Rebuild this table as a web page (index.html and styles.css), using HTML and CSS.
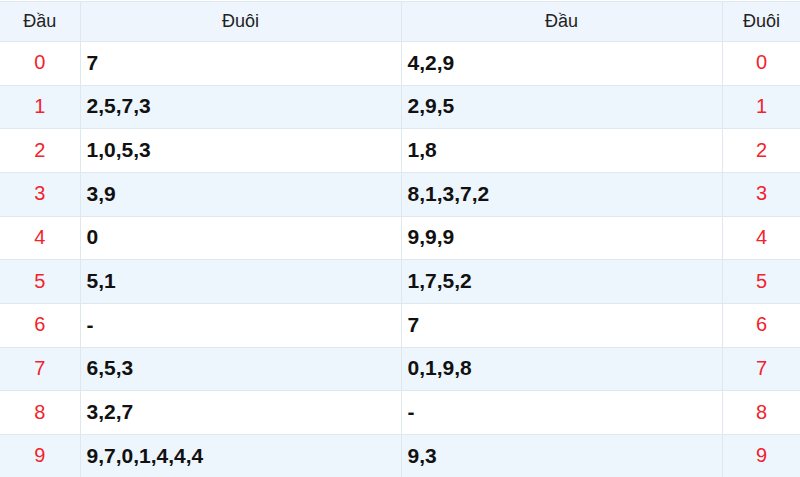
FILE: index.html
```html
<!DOCTYPE html>
<html>
<head>
<meta charset="utf-8">
<link rel="stylesheet" href="styles.css">
</head>
<body>
<table class="lt">
  <colgroup>
    <col class="c-num"><col class="c-val"><col class="c-val"><col class="c-num2">
  </colgroup>
  <thead>
    <tr><th>Đầu</th><th>Đuôi</th><th>Đầu</th><th>Đuôi</th></tr>
  </thead>
  <tbody>
    <tr><td class="n">0</td><td class="v">7</td><td class="v">4,2,9</td><td class="n">0</td></tr>
    <tr><td class="n">1</td><td class="v">2,5,7,3</td><td class="v">2,9,5</td><td class="n">1</td></tr>
    <tr><td class="n">2</td><td class="v">1,0,5,3</td><td class="v">1,8</td><td class="n">2</td></tr>
    <tr><td class="n">3</td><td class="v">3,9</td><td class="v">8,1,3,7,2</td><td class="n">3</td></tr>
    <tr><td class="n">4</td><td class="v">0</td><td class="v">9,9,9</td><td class="n">4</td></tr>
    <tr><td class="n">5</td><td class="v">5,1</td><td class="v">1,7,5,2</td><td class="n">5</td></tr>
    <tr><td class="n">6</td><td class="v">-</td><td class="v">7</td><td class="n">6</td></tr>
    <tr><td class="n">7</td><td class="v">6,5,3</td><td class="v">0,1,9,8</td><td class="n">7</td></tr>
    <tr><td class="n">8</td><td class="v">3,2,7</td><td class="v">-</td><td class="n">8</td></tr>
    <tr><td class="n">9</td><td class="v">9,7,0,1,4,4,4</td><td class="v">9,3</td><td class="n">9</td></tr>
  </tbody>
</table>
</body>
</html>
```
FILE: styles.css
```css
html, body {
  margin: 0;
  padding: 0;
  background: #ffffff;
}
body {
  padding-top: 1px;
  font-family: "Liberation Sans", Arial, sans-serif;
}
.lt {
  width: 801px;
  border-collapse: collapse;
  table-layout: fixed;
}
.c-num { width: 80px; }
.c-val { width: 321px; }
.c-num2 { width: 79px; }
.lt th, .lt td {
  border: 1px solid #dfe7ef;
  padding: 0;
}
.lt tr > :first-child { border-left: none; }
.lt thead tr { height: 40px; }
.lt th {
  background: #eef5fc;
  font-weight: normal;
  font-size: 18px;
  color: #222;
  text-align: center;
}
.lt tbody tr {
  height: 43.67px;
}
.lt td {
  padding-bottom: 1px;
}
.lt tbody tr:nth-child(even) td {
  background: #eef6fd;
}
.n {
  text-align: center;
  color: #f2232c;
  font-size: 20px;
}
.v {
  font-weight: bold;
  font-size: 21px;
  color: #111;
  padding-left: 6px !important;
}
```
